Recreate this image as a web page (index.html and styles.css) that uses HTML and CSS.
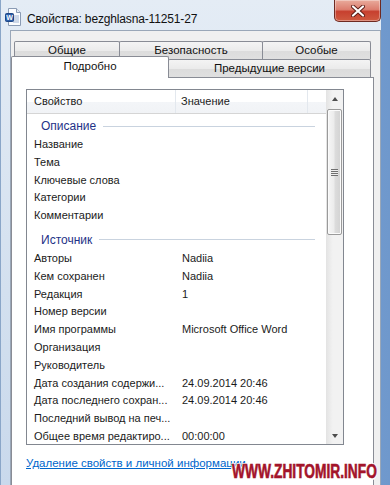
FILE: index.html
```html
<!DOCTYPE html>
<html lang="ru">
<head>
    <meta charset="UTF-8">
    <title>Свойства: bezghlasna-11251-27</title>
    <link rel="stylesheet" href="styles.css">
</head>
<body>
    <div class="screen">
        <div class="window">
            <div class="titlebar">
                <svg class="doc-icon" width="16" height="18" viewBox="0 0 16 18">
                    <path d="M3.5 0.5h8l4 4v13h-12z" fill="#fbfcfe" stroke="#8a9bb4"/>
                    <path d="M11.5 0.5v4h4" fill="#e3e9f2" stroke="#8a9bb4"/>
                    <path d="M8 8h6M8 10h6M8 12h6M8 14h6" stroke="#9fb3d1" stroke-width="1"/>
                    <rect x="0.5" y="5.5" width="8" height="8" rx="1" fill="#2c5ea8" stroke="#1d4585"/>
                    <text x="4.5" y="12" font-size="7" font-family="Liberation Sans, sans-serif" font-weight="bold" fill="#fff" text-anchor="middle">W</text>
                </svg>
                <span class="title">Свойства: bezghlasna-11251-27</span>
                <div class="close-btn">
                    <svg width="14" height="12" viewBox="0 0 14 12">
                        <path d="M2 1.5l10 9M12 1.5l-10 9" stroke="#5b1b14" stroke-width="4" stroke-linecap="round"/>
                        <path d="M2 1.5l10 9M12 1.5l-10 9" stroke="#ffffff" stroke-width="2.2" stroke-linecap="round"/>
                    </svg>
                </div>
            </div>
            <div class="client">
                <div class="tab-row back">
                    <div class="tab tab-general">Общие</div>
                    <div class="tab tab-security">Безопасность</div>
                    <div class="tab tab-custom">Особые</div>
                </div>
                <div class="tab-row front">
                    <div class="tab tab-details selected">Подробно</div>
                    <div class="tab tab-versions">Предыдущие версии</div>
                </div>
                <div class="panel">
                    <div class="listview">
                        <div class="list-main">
                            <div class="list-header">
                                <div class="hcol hcol-name">Свойство</div>
                                <div class="hcol hcol-value">Значение</div>
                                <div class="hcol hcol-rest"></div>
                            </div>
                            <div class="list-body">
                                <div class="group first"><span>Описание</span><i></i></div>
                                <div class="row"><span class="name">Название</span><span class="value"></span></div>
                                <div class="row"><span class="name">Тема</span><span class="value"></span></div>
                                <div class="row"><span class="name">Ключевые слова</span><span class="value"></span></div>
                                <div class="row"><span class="name">Категории</span><span class="value"></span></div>
                                <div class="row"><span class="name">Комментарии</span><span class="value"></span></div>
                                <div class="group"><span>Источник</span><i></i></div>
                                <div class="row"><span class="name">Авторы</span><span class="value">Nadiia</span></div>
                                <div class="row"><span class="name">Кем сохранен</span><span class="value">Nadiia</span></div>
                                <div class="row"><span class="name">Редакция</span><span class="value">1</span></div>
                                <div class="row"><span class="name">Номер версии</span><span class="value"></span></div>
                                <div class="row"><span class="name">Имя программы</span><span class="value">Microsoft Office Word</span></div>
                                <div class="row"><span class="name">Организация</span><span class="value"></span></div>
                                <div class="row"><span class="name">Руководитель</span><span class="value"></span></div>
                                <div class="row"><span class="name">Дата создания содержи...</span><span class="value">24.09.2014 20:46</span></div>
                                <div class="row"><span class="name">Дата последнего сохран...</span><span class="value">24.09.2014 20:46</span></div>
                                <div class="row"><span class="name">Последний вывод на печ...</span><span class="value"></span></div>
                                <div class="row"><span class="name">Общее время редактиро...</span><span class="value">00:00:00</span></div>
                            </div>
                        </div>
                        <div class="scrollbar">
                            <div class="sb-btn"><span class="arrow-up"></span></div>
                            <div class="sb-track">
                                <div class="sb-thumb"><span class="grip"></span></div>
                            </div>
                            <div class="sb-btn"><span class="arrow-down"></span></div>
                        </div>
                    </div>
                    <a class="remove-link" href="#">Удаление свойств и личной информации</a>
                </div>
            </div>
        </div>
        <div class="watermark">WWW.ZHITOMIR.INFO</div>
    </div>
</body>
</html>
```

FILE: styles.css
```css
body {
    margin: 0;
    padding: 0;
    background-color: #7fa6d4;
    font-family: 'Liberation Sans', Arial, sans-serif;
    font-size: 11px;
    color: #1b1b1b;
}
.screen {
    position: relative;
    width: 390px;
    height: 485px;
    overflow: hidden;
    background: linear-gradient(to right, #9bbbe0, #6f98cc);
}
.window {
    width: 381px;
    height: 485px;
    padding-left: 9px;
    box-sizing: border-box;
    background: linear-gradient(to bottom, #e4ecf5, #d3e0ef 60%, #c9d9ec);
    border-left: 1px solid #8aa6c8;
    display: flex;
    flex-direction: column;
}
.titlebar {
    height: 30px;
    margin-left: -5px;
    display: flex;
    align-items: flex-start;
    flex-shrink: 0;
}
.doc-icon {
    margin-top: 8px;
    margin-right: 6px;
}
.title {
    margin-top: 12px;
    font-size: 12px;
    letter-spacing: -0.15px;
    color: #111;
}
.close-btn {
    margin-left: auto;
    width: 45px;
    height: 21px;
    border: 1px solid #6e2a22;
    border-top: none;
    border-radius: 0 0 5px 5px;
    background: linear-gradient(to bottom, #e9ab9c 0%, #dc7e6f 45%, #c7402f 55%, #cf5a40 100%);
    display: flex;
    align-items: center;
    justify-content: center;
    box-shadow: inset 0 0 0 1px rgba(255,255,255,0.35);
}
.client {
    flex: 1;
    background-color: #f0f0f0;
    border: 1px solid #9aa7b8;
    border-bottom: none;
    padding-top: 10px;
    display: flex;
    flex-direction: column;
}
.tab-row {
    display: flex;
    align-items: flex-start;
    height: 18px;
}
.tab-row.back {
    padding-left: 3px;
}
.tab {
    height: 18px;
    box-sizing: border-box;
    border: 1px solid #898c95;
    border-bottom: none;
    border-radius: 2px 2px 0 0;
    background: linear-gradient(to bottom, #f4f4f4 0%, #ebebeb 50%, #dcdcdc 51%, #e0e0e0 100%);
    text-align: center;
    line-height: 17px;
    font-size: 11.5px;
    color: #111;
}
.tab + .tab {
    margin-left: -1px;
}
.tab-general { width: 106px; }
.tab-security { width: 144px; }
.tab-custom { width: 109px; }
.tab-details { width: 158px; }
.tab-versions { width: 203px; }
.tab.selected {
    position: relative;
    z-index: 1;
    height: 22px;
    margin-top: -3px;
    margin-bottom: -1px;
    background: #fff;
    line-height: 19px;
}
.panel {
    flex: 1;
    width: 363px;
    box-sizing: border-box;
    background-color: #fff;
    border: 1px solid #898c95;
    border-bottom: none;
    padding: 11px 0 0 14px;
}
.listview {
    width: 318px;
    height: 356px;
    box-sizing: border-box;
    border: 1px solid #828790;
    display: flex;
}
.list-main {
    flex: 1;
    overflow: hidden;
}
.list-header {
    display: flex;
    height: 24px;
    box-sizing: border-box;
    border-bottom: 1px solid #d5d5d5;
    background: linear-gradient(to bottom, #ffffff 0%, #ffffff 50%, #f3f5f8 51%, #f1f3f6 100%);
}
.hcol {
    line-height: 23px;
    border-right: 1px solid #e3e8ee;
}
.hcol-name {
    width: 149px;
    padding-left: 7px;
    box-sizing: border-box;
}
.hcol-value {
    width: 132px;
    padding-left: 5px;
    box-sizing: border-box;
}
.hcol-rest {
    flex: 1;
    border-right: none;
}
.list-body {
    padding-top: 2px;
}
.group {
    display: flex;
    align-items: center;
    height: 20px;
    padding-left: 14px;
    margin-right: 11px;
    color: #1e3287;
    font-size: 12px;
}
.group i {
    flex: 1;
    height: 1px;
    margin-left: 7px;
    background-color: #c9d3df;
}
.row + .group {
    margin-top: 5px;
}
.row {
    display: flex;
    height: 17.8px;
    line-height: 17.8px;
    white-space: nowrap;
}
.name {
    width: 155px;
    padding-left: 7px;
    box-sizing: border-box;
}
.scrollbar {
    width: 17px;
    display: flex;
    flex-direction: column;
    background: linear-gradient(to right, #e3e3e3, #f2f2f2 40%, #f2f2f2);
}
.sb-btn {
    height: 17px;
    display: flex;
    align-items: center;
    justify-content: center;
}
.arrow-up, .arrow-down {
    width: 0;
    height: 0;
    border-left: 3.5px solid transparent;
    border-right: 3.5px solid transparent;
}
.arrow-up {
    border-bottom: 4px solid #4d4d4d;
}
.arrow-down {
    border-top: 4px solid #4d4d4d;
}
.sb-track {
    flex: 1;
    padding-top: 2px;
}
.sb-thumb {
    width: 15px;
    height: 126px;
    margin-left: 1px;
    box-sizing: border-box;
    border: 1px solid #9a9a9a;
    border-radius: 2px;
    background: linear-gradient(to right, #f6f6f6, #ececec 45%, #dcdcdc 55%, #d2d2d2);
    box-shadow: inset 0 0 0 1px #fbfbfb;
    display: flex;
    align-items: center;
    justify-content: center;
}
.grip {
    width: 7px;
    height: 7px;
    background: repeating-linear-gradient(to bottom, #6f6f6f 0, #6f6f6f 1px, #eeeeee 1px, #eeeeee 2px);
}
.remove-link {
    display: block;
    margin-top: 11px;
    line-height: 14px;
    font-size: 11.5px;
    color: #0066cc;
    text-decoration: underline;
    white-space: nowrap;
}
.watermark {
    position: absolute;
    left: 232px;
    top: 460px;
    font-family: 'Liberation Sans', Arial, sans-serif;
    font-weight: bold;
    font-size: 19.5px;
    line-height: 22px;
    color: #a3142a;
    -webkit-text-stroke: 0.6px #a3142a;
    transform: scaleX(0.705);
    transform-origin: left center;
    white-space: nowrap;
    text-shadow: -1px -1px 0 #fff, 1px -1px 0 #fff, -1px 1px 0 #fff, 1px 1px 0 #fff, 0 2px 0 #fff;
}
```
